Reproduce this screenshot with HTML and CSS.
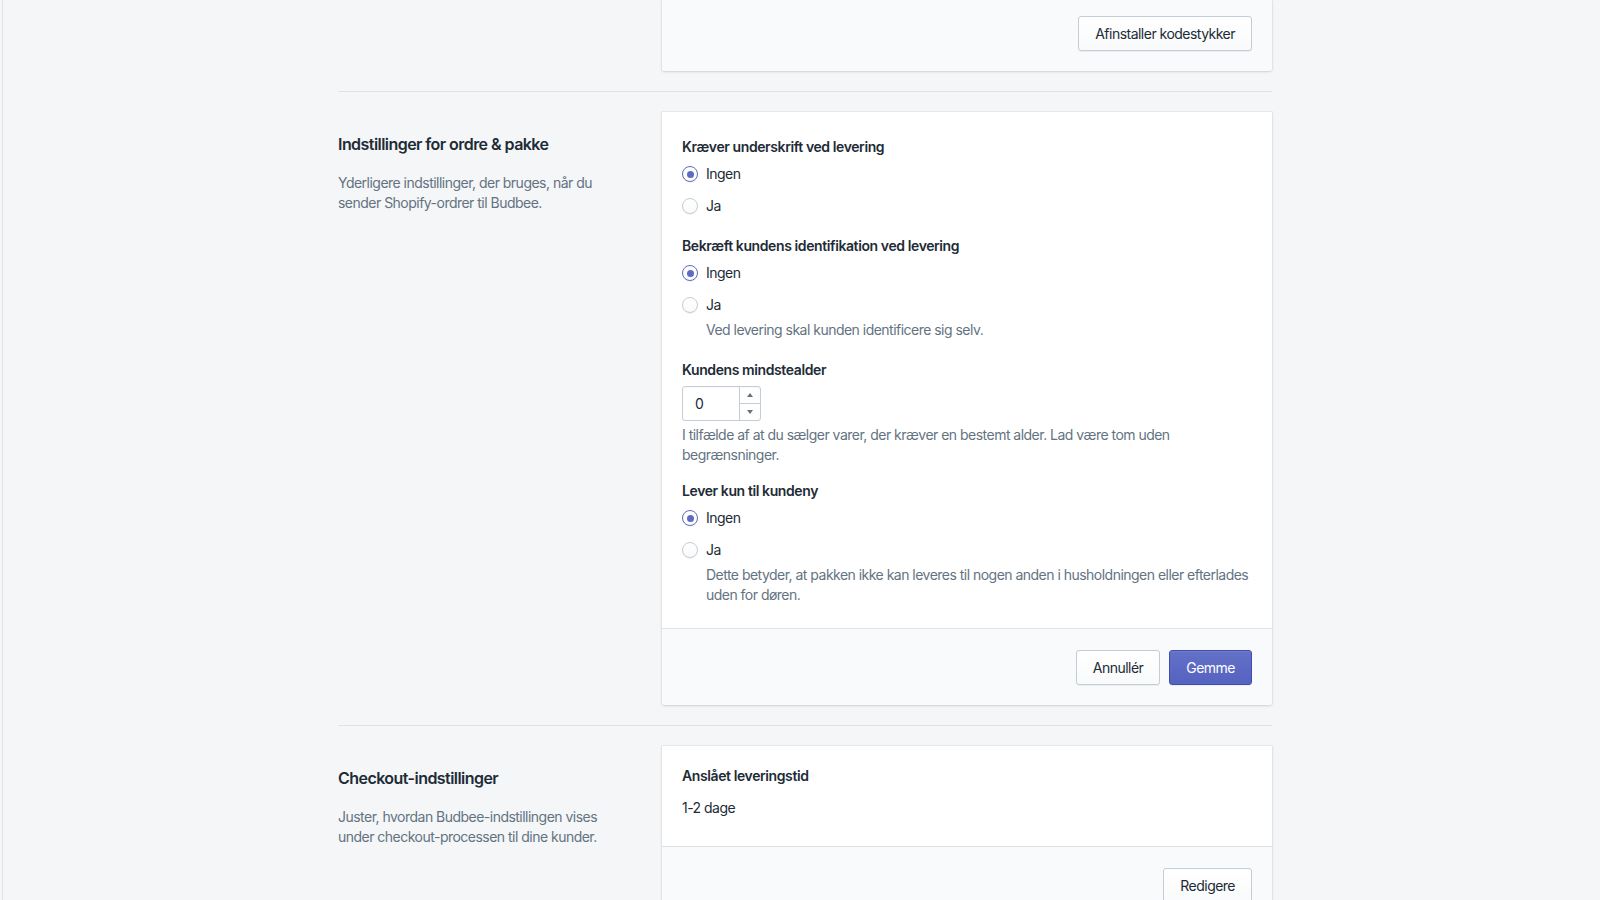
FILE: index.html
```html
<!DOCTYPE html>
<html lang="da">
<head>
<meta charset="utf-8">
<title>Budbee indstillinger</title>
<link rel="stylesheet" href="styles.css">
</head>
<body>
<div class="frame">
  <main class="container">
    <section class="annotated first">
      <div class="annotation"></div>
      <div class="card">
        <div class="card-footer top-footer">
          <button class="btn">Afinstaller kodestykker</button>
        </div>
      </div>
    </section>

    <section class="annotated">
      <div class="annotation">
        <h2 class="ann-title">Indstillinger for ordre &amp; pakke</h2>
        <p class="ann-desc">Yderligere indstillinger, der bruges, når du sender Shopify-ordrer til Budbee.</p>
      </div>
      <div class="card">
        <div class="card-section form-section">
          <div class="field">
            <div class="label">Kræver underskrift ved levering</div>
            <ul class="choices">
              <li class="choice"><span class="radio checked"></span><span class="choice-text">Ingen</span></li>
              <li class="choice"><span class="radio"></span><span class="choice-text">Ja</span></li>
            </ul>
          </div>
          <div class="field">
            <div class="label">Bekræft kundens identifikation ved levering</div>
            <ul class="choices">
              <li class="choice"><span class="radio checked"></span><span class="choice-text">Ingen</span></li>
              <li class="choice"><span class="radio"></span><span class="choice-text">Ja</span></li>
            </ul>
            <p class="choice-help">Ved levering skal kunden identificere sig selv.</p>
          </div>
          <div class="field field-gap">
            <div class="label">Kundens mindstealder</div>
            <div class="number-input">
              <span class="number-value">0</span>
              <span class="spinner">
                <span class="spin-half"><svg width="6" height="4" viewBox="0 0 6 4"><path d="M0 4 L3 0 L6 4 Z" fill="#637381"/></svg></span>
                <span class="spin-half"><svg width="6" height="4" viewBox="0 0 6 4"><path d="M0 0 L3 4 L6 0 Z" fill="#637381"/></svg></span>
              </span>
            </div>
            <p class="help">I tilfælde af at du sælger varer, der kræver en bestemt alder. Lad være tom uden begrænsninger.</p>
          </div>
          <div class="field">
            <div class="label">Lever kun til kundeny</div>
            <ul class="choices">
              <li class="choice"><span class="radio checked"></span><span class="choice-text">Ingen</span></li>
              <li class="choice"><span class="radio"></span><span class="choice-text">Ja</span></li>
            </ul>
            <p class="choice-help">Dette betyder, at pakken ikke kan leveres til nogen anden i husholdningen eller efterlades uden for døren.</p>
          </div>
        </div>
        <div class="card-footer">
          <button class="btn">Annullér</button>
          <button class="btn btn-primary">Gemme</button>
        </div>
      </div>
    </section>

    <section class="annotated">
      <div class="annotation">
        <h2 class="ann-title">Checkout-indstillinger</h2>
        <p class="ann-desc">Juster, hvordan Budbee-indstillingen vises under checkout-processen til dine kunder.</p>
      </div>
      <div class="card">
        <div class="card-section info-section">
          <div class="label">Anslået leveringstid</div>
          <p class="value">1-2 dage</p>
        </div>
        <div class="card-footer">
          <button class="btn">Redigere</button>
        </div>
      </div>
    </section>
  </main>
</div>
</body>
</html>
```

FILE: styles.css
```css
* { box-sizing: border-box; }

html, body {
  margin: 0;
  padding: 0;
  height: 100%;
  overflow: hidden;
}

body {
  background: #f4f6f8;
  font-family: Inter, "Noto Sans", "Liberation Sans", sans-serif;
  font-size: 14px;
  line-height: 20px;
  letter-spacing: -0.52px;
  color: #212b36;
}

.frame {
  margin-left: 2px;
  border-left: 1px solid #dfe3e8;
  min-height: 100%;
}

.container {
  width: 934px;
  margin-left: 335px;
}

.annotated {
  display: flex;
  padding: 20px 0;
}

.annotated + .annotated {
  border-top: 1px solid #dfe3e8;
}

.annotated.first {
  padding-top: 0;
}

.annotation {
  width: 324px;
  flex: none;
  padding: 20px 40px 0 0;
}

.ann-title {
  margin: 0;
  font-size: 16px;
  line-height: 24px;
  font-weight: 600;
  letter-spacing: -0.55px;
  color: #212b36;
}

.ann-desc {
  margin: 17px 0 0;
  color: #637381;
}

.card {
  flex: 1;
  background: #fff;
  border-radius: 0 0 3px 3px;
  box-shadow: 0 0 0 1px rgba(63, 63, 68, 0.05), 0 1px 3px 0 rgba(63, 63, 68, 0.15);
}

.card-section {
  padding: 20px;
}

.form-section {
  padding: 25px 20px 23px;
}

.info-section {
  padding: 20px 20px 28px;
}

.card-footer {
  display: flex;
  justify-content: flex-end;
  gap: 9px;
  padding: 21px 20px 20px;
  background: #f9fafb;
  border-top: 1px solid #dfe3e8;
  border-radius: 0 0 3px 3px;
}

.top-footer {
  padding-top: 16px;
  border-top: none;
}

.field + .field {
  margin-top: 16px;
}

.field.field-gap {
  margin-top: 20px;
}

.label {
  font-weight: 600;
  letter-spacing: -0.4px;
  color: #212b36;
}

.choices {
  list-style: none;
  margin: 3px 0 0;
  padding: 0;
  display: flex;
  flex-direction: column;
  gap: 4px;
}

.choice {
  display: flex;
  align-items: center;
  gap: 8px;
  padding: 4px 0;
}

.radio {
  width: 16px;
  height: 16px;
  flex: none;
  border-radius: 50%;
  border: 1px solid #c4cdd5;
  background: linear-gradient(to bottom, #fff, #f9fafb);
  box-shadow: 0 1px 0 0 rgba(22, 29, 37, 0.05);
  display: flex;
  align-items: center;
  justify-content: center;
}

.radio.checked {
  border: 1.5px solid #5c6ac4;
  background: #fff;
}

.radio.checked::after {
  content: "";
  width: 7px;
  height: 7px;
  border-radius: 50%;
  background: #5c6ac4;
}

.choice-text {
  color: #212b36;
}

.choice-help {
  margin: 1px 0 0 24px;
  color: #637381;
}

.help {
  margin: 4px 0 0;
  color: #637381;
}

.number-input {
  margin-top: 6px;
  width: 79px;
  height: 35px;
  display: flex;
  border: 1px solid #c4cdd5;
  border-radius: 3px;
  background: #fff;
  box-shadow: inset 0 1px 0 0 rgba(99, 115, 129, 0.05);
}

.number-value {
  flex: 1;
  padding-left: 12px;
  line-height: 33px;
  color: #212b36;
}

.spinner {
  width: 21px;
  display: flex;
  flex-direction: column;
  border-left: 1px solid #c4cdd5;
}

.spin-half {
  flex: 1;
  display: flex;
  align-items: center;
  justify-content: center;
}

.spin-half + .spin-half {
  border-top: 1px solid #c4cdd5;
}

.value {
  margin: 12px 0 0;
  color: #212b36;
}

.btn {
  font-family: inherit;
  font-size: 14px;
  line-height: 20px;
  letter-spacing: -0.52px;
  height: 35px;
  padding: 7px 16px;
  border: 1px solid #c4cdd5;
  border-radius: 3px;
  background: linear-gradient(to bottom, #fff, #f9fafb);
  box-shadow: 0 1px 0 0 rgba(22, 29, 37, 0.05);
  color: #212b36;
  cursor: pointer;
}

.btn-primary {
  background: linear-gradient(to bottom, #6371c7, #5563c1);
  border-color: #3f4eae;
  box-shadow: inset 0 1px 0 0 #6f7bcb, 0 1px 0 0 rgba(22, 29, 37, 0.05);
  color: #fff;
}
```
